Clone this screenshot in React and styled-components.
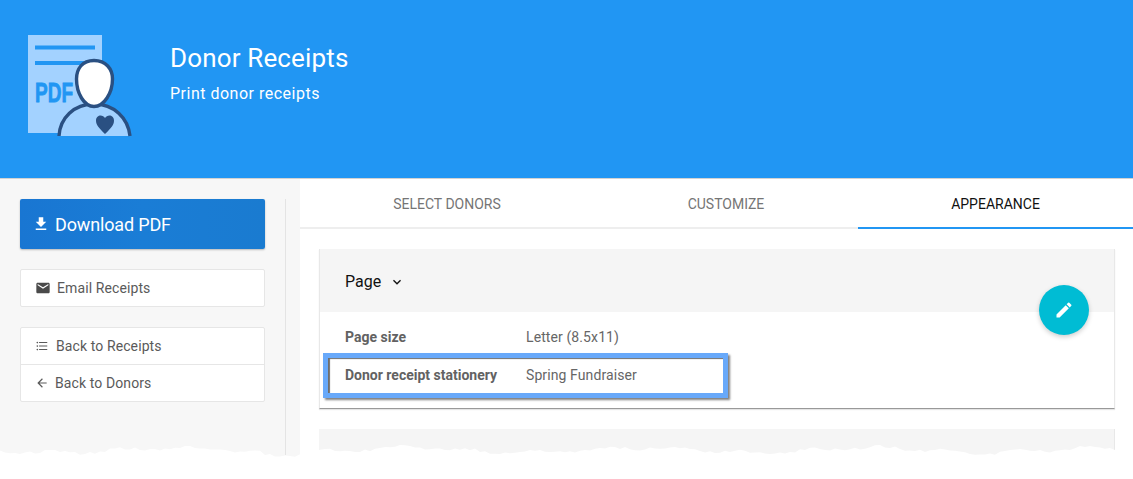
import React from "react";
import styled, { createGlobalStyle } from "styled-components";
import { MdFileDownload, MdEmail, MdFormatListBulleted, MdArrowBack, MdEdit, MdKeyboardArrowDown } from "react-icons/md";

const Global = createGlobalStyle`
  html, body { margin: 0; padding: 0; background: #fff; }
  body { font-family: Roboto, "Liberation Sans", sans-serif; -webkit-font-smoothing: antialiased; }
`;

const Page = styled.div`
  position: relative;
  width: 1133px;
  height: 479px;
  overflow: hidden;
  background: #fff;
`;

const Header = styled.header`
  display: flex;
  align-items: flex-start;
  height: 179px;
  padding: 35px 0 0 28px;
  box-sizing: border-box;
  background: #2196f3;
  border-bottom: 1px solid #d2d2d2;
`;

const HeaderText = styled.div`
  margin-left: 38px;
  padding-top: 6px;
  color: #fff;
`;

const Title = styled.h1`
  margin: 0;
  font-size: 26px;
  line-height: 34px;
  font-weight: 400;
  letter-spacing: 0.15px;
`;

const Subtitle = styled.p`
  margin: 9px 0 0;
  font-size: 16px;
  line-height: 20px;
  letter-spacing: 0.5px;
  font-weight: 400;
`;

const Body = styled.div`
  display: flex;
  height: 300px;
`;

const Sidebar = styled.aside`
  width: 300px;
  flex: none;
  box-sizing: border-box;
  padding: 20px 0 0 20px;
  background: #f7f7f7;
`;

const SidebarInner = styled.div`
  display: flex;
  flex-direction: column;
  width: 266px;
  height: 256px;
  box-sizing: border-box;
  padding-right: 20px;
  border-right: 1px solid #e4e4e4;
`;

const PrimaryButton = styled.button`
  display: flex;
  align-items: center;
  gap: 5px;
  width: 245px;
  height: 50px;
  padding: 0 0 0 12px;
  border: 0;
  border-radius: 2px;
  background: linear-gradient(90deg, #1976d2, #1a7dd6 50%, #1a7bd0);
  box-shadow: 0 1px 2px rgba(0, 0, 0, 0.25);
  color: #fff;
  font: 400 18px Roboto, sans-serif;
  letter-spacing: -0.15px;
`;

const ActionGroup = styled.div`
  margin-top: ${(p) => p.$gap}px;
  width: 245px;
  box-sizing: border-box;
  background: #fff;
  border: 1px solid #e6e6e6;
  border-radius: 2px;
`;

const ActionRow = styled.div`
  display: flex;
  align-items: center;
  gap: ${(p) => p.$gap}px;
  height: 36px;
  padding-left: 14px;
  color: #5a5a5a;
  font-size: 14px;
  letter-spacing: 0.1px;
  & + & {
    border-top: 1px solid #e6e6e6;
  }
  svg { flex: none; }
`;

const Main = styled.main`
  flex: 1;
  min-width: 0;
`;

const Tabs = styled.nav`
  display: grid;
  grid-template-columns: 294px 264px 275px;
  height: 50px;
`;

const Tab = styled.div`
  display: flex;
  align-items: center;
  justify-content: center;
  box-sizing: border-box;
  padding-top: 2px;
  border-bottom: 2px solid ${(p) => (p.$active ? "#2196f3" : "#eeeeee")};
  color: ${(p) => (p.$active ? "#111" : "#757575")};
  font-size: 14px;
  font-weight: 400;
`;

const Content = styled.div`
  padding: 20px 18px 0 19px;
`;

const Card = styled.section`
  position: relative;
  background: #fff;
  border-right: 1px solid #e8e8e8;
  border-left: 1px solid #e8e8e8;
  border-bottom: 1px solid #999;
  box-shadow: 0 1px 1px rgba(0, 0, 0, 0.1);
`;

const CardHead = styled.div`
  display: flex;
  align-items: center;
  gap: 8px;
  height: 63px;
  padding: 2px 0 0 25px;
  box-sizing: border-box;
  background: #f5f5f5;
  color: #111;
  font-size: 16px;
`;

const CardBody = styled.div`
  padding: 6px 0 14px;
`;

const Row = styled.div`
  position: relative;
  display: flex;
  align-items: center;
  height: 38px;
  padding-left: 25px;
  font-size: 14px;
  color: #666;
`;

const RowLabel = styled.span`
  width: 181px;
  font-weight: 700;
  color: #626262;
`;

const RowValue = styled.span`
  letter-spacing: 0.1px;
`;

const Highlight = styled.div`
  position: absolute;
  left: 3px;
  top: -3px;
  width: 405px;
  height: 45px;
  box-sizing: border-box;
  border: 5px solid #68a9fa;
  box-shadow: 2px 2px 2px rgba(0, 0, 0, 0.5), inset 3px 2px 1px -1px #6e6e6e;
  pointer-events: none;
`;

const Fab = styled.button`
  position: absolute;
  top: 36px;
  right: 25px;
  display: flex;
  align-items: center;
  justify-content: center;
  width: 50px;
  height: 50px;
  padding: 0;
  border: 0;
  border-radius: 50%;
  background: #00bcd4;
  color: #fff;
  box-shadow: 0 2px 5px rgba(0, 0, 0, 0.2);
`;

const NextCard = styled.div`
  margin-top: 20px;
  height: 60px;
  background: #f5f5f5;
  border-right: 1px solid #e8e8e8;
`;

const Tear = styled.svg`
  position: absolute;
  left: 0;
  bottom: 0;
  display: block;
`;

function tearPoints() {
  const pts = ["0,479"];
  let s = 7;
  for (let x = 0; x <= 1133; x += 5) {
    s = (s * 137 + 71) % 251;
    const wave = 2.5 * Math.sin(x / 37) + 1.5 * Math.sin(x / 11);
    let y = 449 + wave + (s % 4) * 0.8;
    if (x > 262 && x < 300) y += 3;
    pts.push(`${x},${y.toFixed(1)}`);
  }
  pts.push("1133,479");
  return pts.join(" ");
}

function Logo() {
  return (
    <svg width="104" height="102" viewBox="0 0 104 102" style={{ flex: "none" }}>
      <rect x="0" y="0" width="74" height="98" fill="#a3d2ff" />
      <rect x="7" y="10.500" width="60" height="4" fill="#2196f3" />
      <rect x="7" y="26" width="60" height="4" fill="#2196f3" />
      <text x="7" y="67" fontFamily="'Liberation Sans', sans-serif" fontWeight="700" fontSize="27" fill="#2196f3" stroke="#2196f3" strokeWidth="0.8" textLength="38" lengthAdjust="spacingAndGlyphs">PDF</text>
      <path d="M31 101 C32 83 46 69 66 69 C86 69 100 83 102 101 Z" fill="#a3d2ff" />
      <path d="M31 101 C32 83 46 69 66 69 C86 69 100 83 102 101" fill="none" stroke="#2a5082" strokeWidth="3.4" />
      <path d="M66 25.500 C54 25.500 48.500 34 48.500 44 C48.500 58 56 71.500 66 71.500 C76 71.500 84.500 58 84.500 44 C84.500 34 78 25.500 66 25.500 Z" fill="#fff" stroke="#2a5082" strokeWidth="3.4" />
      <path d="M77 99 C71 93 68 90 68 85.500 C68 82 70.500 80.500 72.500 80.500 C74.500 80.500 76 81.500 77 83 C78 81.500 79.500 80.500 81.500 80.500 C83.500 80.500 86 82 86 85.500 C86 90 83 93 77 99 Z" fill="#2a5082" />
    </svg>
  );
}

export default function App() {
  return (
    <Page>
      <Global />
      <Header>
        <Logo />
        <HeaderText>
          <Title>Donor Receipts</Title>
          <Subtitle>Print donor receipts</Subtitle>
        </HeaderText>
      </Header>
      <Body>
        <Sidebar>
          <SidebarInner>
            <PrimaryButton><MdFileDownload size={18} />Download PDF</PrimaryButton>
            <ActionGroup $gap={20}>
              <ActionRow $gap={6}><MdEmail size={16} color="#4a4a4a" />Email Receipts</ActionRow>
            </ActionGroup>
            <ActionGroup $gap={20}>
              <ActionRow $gap={7}><MdFormatListBulleted size={14} />Back to Receipts</ActionRow>
              <ActionRow $gap={6}><MdArrowBack size={14} />Back to Donors</ActionRow>
            </ActionGroup>
          </SidebarInner>
        </Sidebar>
        <Main>
          <Tabs>
            <Tab>SELECT DONORS</Tab>
            <Tab>CUSTOMIZE</Tab>
            <Tab $active>APPEARANCE</Tab>
          </Tabs>
          <Content>
            <Card>
              <CardHead>Page <MdKeyboardArrowDown size={16} /></CardHead>
              <CardBody>
                <Row><RowLabel>Page size</RowLabel><RowValue>Letter (8.5x11)</RowValue></Row>
                <Row>
                  <RowLabel>Donor receipt stationery</RowLabel><RowValue>Spring Fundraiser</RowValue>
                  <Highlight />
                </Row>
              </CardBody>
              <Fab><MdEdit size={20} /></Fab>
            </Card>
            <NextCard />
          </Content>
        </Main>
      </Body>
      <Tear width="1133" height="479" viewBox="0 0 1133 479"><polygon points={tearPoints()} fill="#fff" /></Tear>
    </Page>
  );
}
